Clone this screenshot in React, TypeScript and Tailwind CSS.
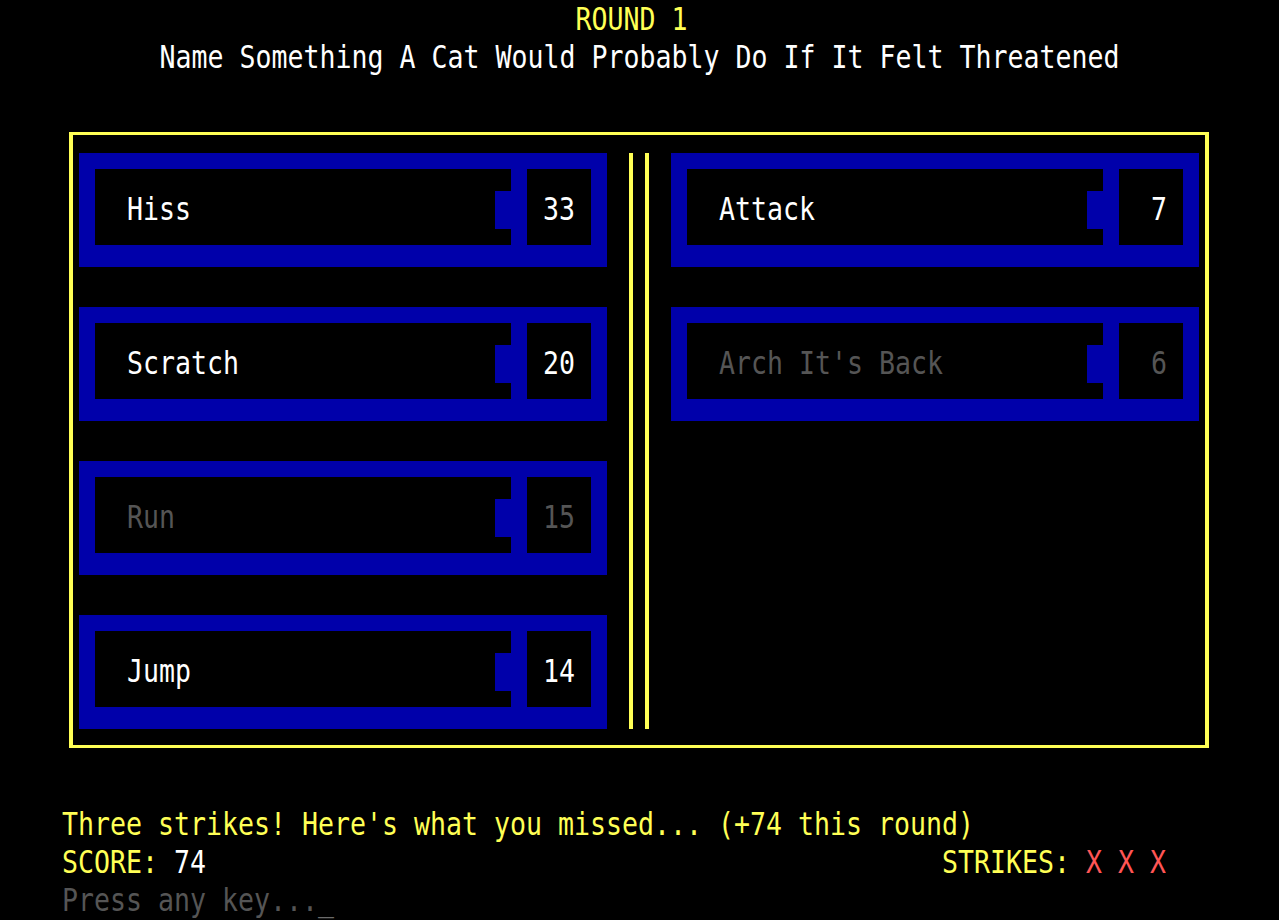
const dos = "font-['DejaVu_Sans_Mono','Liberation_Mono',monospace] text-[26.58px] leading-[38px]";

type Answer = { text: string; points: number; revealed: boolean };

const left: Answer[] = [
  { text: "Hiss", points: 33, revealed: true },
  { text: "Scratch", points: 20, revealed: true },
  { text: "Run", points: 15, revealed: false },
  { text: "Jump", points: 14, revealed: true },
];

const right: Answer[] = [
  { text: "Attack", points: 7, revealed: true },
  { text: "Arch It's Back", points: 6, revealed: false },
];

function Glyphs({ children, className = "" }: { children: React.ReactNode; className?: string }) {
  return <span className={`inline-block scale-y-[1.19] whitespace-pre ${className}`}>{children}</span>;
}

function AnswerCard({ a }: { a: Answer }) {
  const color = a.revealed ? "text-white" : "text-[#555555]";
  return (
    <div className="flex h-[114px] w-[528px] bg-[#0000aa] pt-4 pr-4 pb-[22px] pl-4">
      <div className="flex w-[416px]">
        <div className="flex flex-1 items-center bg-black pt-[3px] pl-8">
          <Glyphs className={color}>{a.text}</Glyphs>
        </div>
        <div className="flex w-4 flex-col">
          <div className="h-[22px] bg-black" />
          <div className="h-[38px]" />
          <div className="flex-1 bg-black" />
        </div>
      </div>
      <div className="ml-4 flex w-16 items-center justify-end bg-black pt-[3px] pr-4">
        <Glyphs className={color}>{a.points}</Glyphs>
      </div>
    </div>
  );
}

export default function App() {
  return (
    <div className={`h-[920px] w-full overflow-hidden bg-black ${dos}`}>
      <header>
        <div className="pr-4 text-center text-[#ffff55]">
          <Glyphs>ROUND 1</Glyphs>
        </div>
        <div className="text-center text-white">
          <Glyphs>Name Something A Cat Would Probably Do If It Felt Threatened</Glyphs>
        </div>
      </header>

      <section className="mt-[56px] ml-[69px] flex w-[1140px] border-x-4 border-y-[3px] border-[#ffff55] px-[6px] pt-[18px] pb-4">
        <div className="flex flex-col gap-10">
          {left.map((a) => (
            <AnswerCard key={a.text} a={a} />
          ))}
        </div>
        <div className="mx-[22px] flex gap-3">
          <div className="w-1 bg-[#ffff55]" />
          <div className="w-1 bg-[#ffff55]" />
        </div>
        <div className="flex flex-col gap-10">
          {right.map((a) => (
            <AnswerCard key={a.text} a={a} />
          ))}
        </div>
      </section>

      <footer className="mt-[57px] pl-[62px]">
        <div className="text-[#ffff55]">
          <Glyphs>Three strikes! Here's what you missed... (+74 this round)</Glyphs>
        </div>
        <div className="flex justify-between pr-[113px]">
          <Glyphs>
            <span className="text-[#ffff55]">SCORE: </span>
            <span className="text-white">74</span>
          </Glyphs>
          <Glyphs>
            <span className="text-[#ffff55]">STRIKES: </span>
            <span className="text-[#ff5555]">X X X</span>
          </Glyphs>
        </div>
        <div className="text-[#555555]">
          <Glyphs>
            Press any key...<span className="text-[#6b6b6b]">_</span>
          </Glyphs>
        </div>
      </footer>
    </div>
  );
}
